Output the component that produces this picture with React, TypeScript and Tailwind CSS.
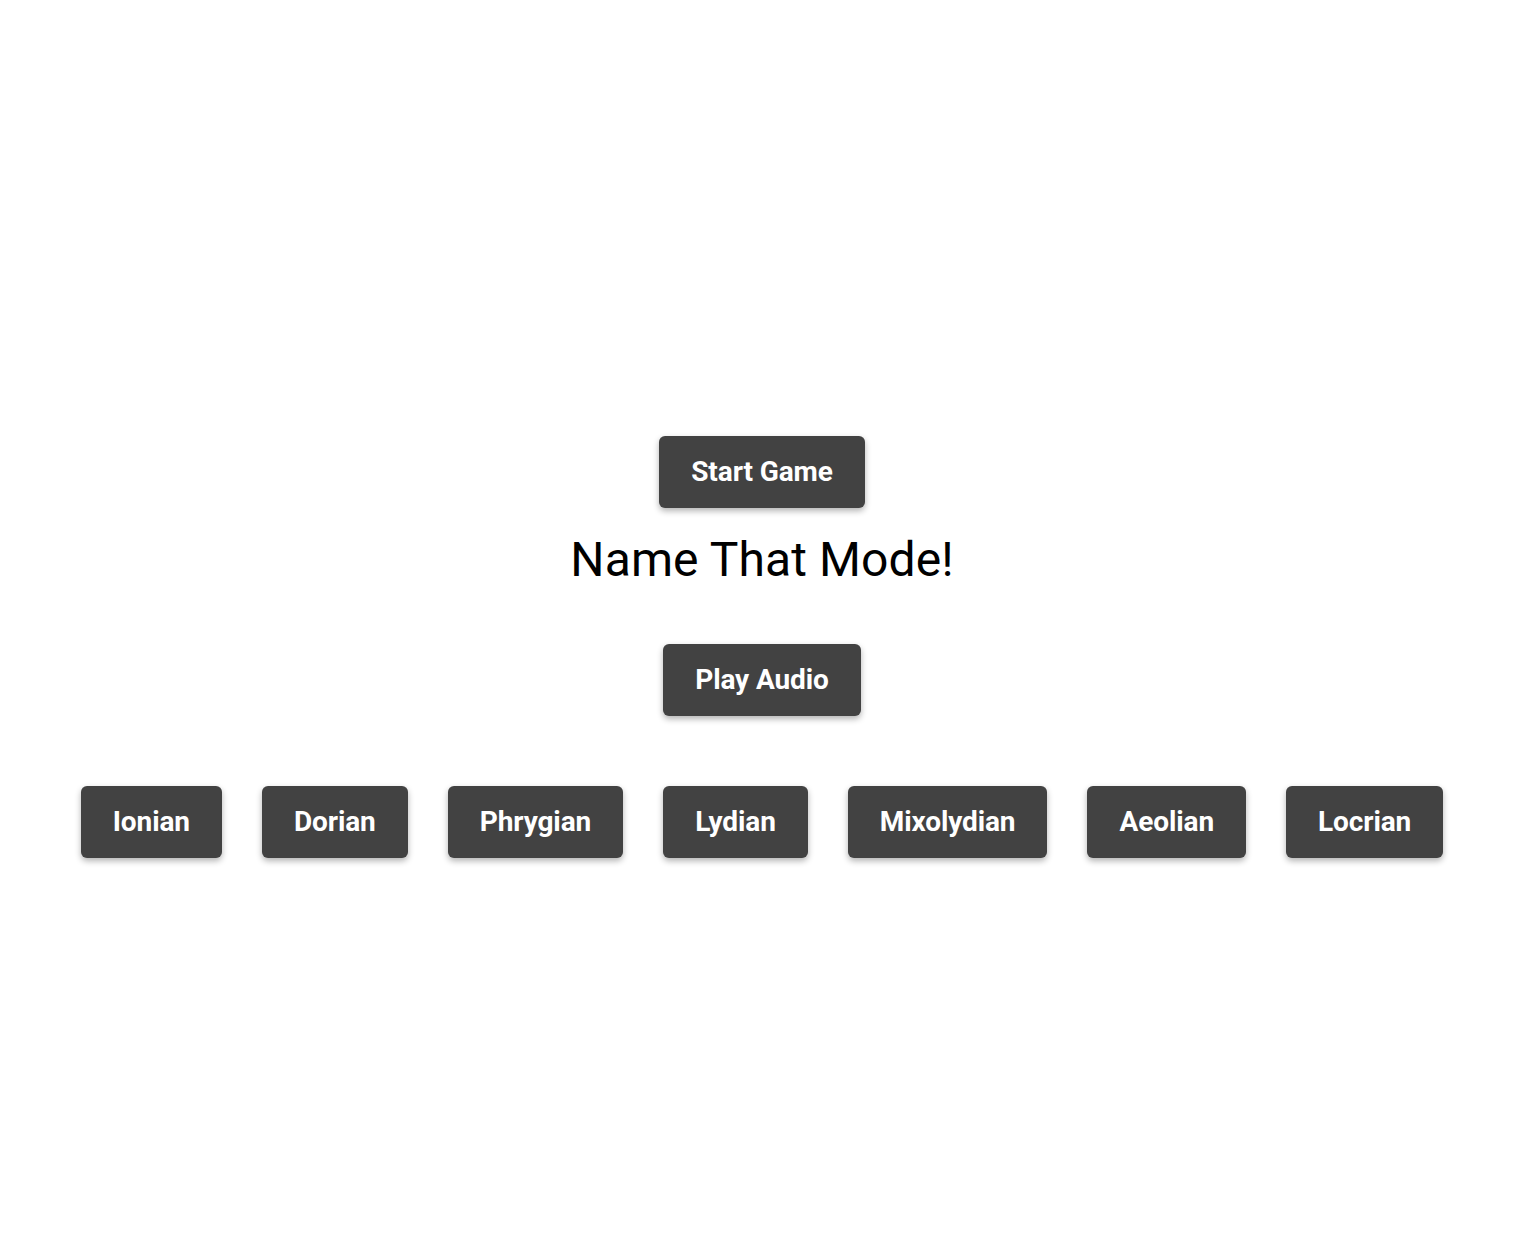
import React from "react";

const modes = ["Ionian", "Dorian", "Phrygian", "Lydian", "Mixolydian", "Aeolian", "Locrian"];

function Btn({ children }: { children: React.ReactNode }) {
  return (
    <button className="h-[72px] px-8 rounded-md bg-[#424242] text-white text-[28px] font-bold leading-[40px] tracking-[-0.1px] shadow-[0_3px_6px_rgba(0,0,0,0.3)]">
      {children}
    </button>
  );
}

export default function App() {
  return (
    <div className="min-h-screen bg-white flex flex-col items-center pt-[436px] pr-[2px]" style={{ fontFamily: "Roboto, 'Liberation Sans', sans-serif" }}>
      <Btn>Start Game</Btn>
      <h1 className="mt-[24px] text-[48px] leading-[56px] font-normal text-black tracking-[0.1px]">Name That Mode!</h1>
      <div className="mt-[56px]">
        <Btn>Play Audio</Btn>
      </div>
      <div className="mt-[70px] flex gap-10 justify-center">
        {modes.map((m) => (
          <Btn key={m}>{m}</Btn>
        ))}
      </div>
    </div>
  );
}
